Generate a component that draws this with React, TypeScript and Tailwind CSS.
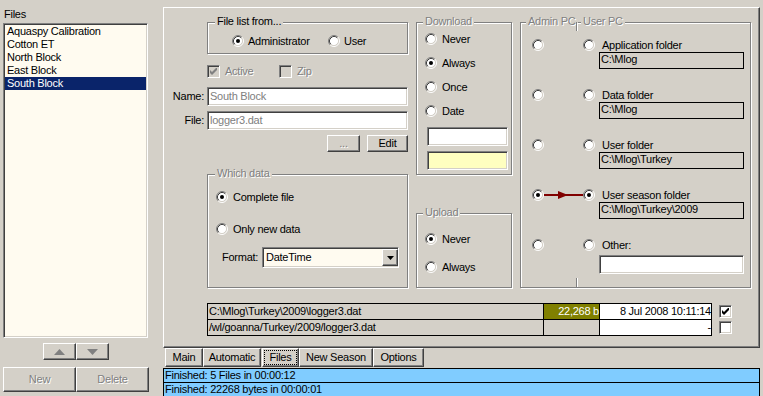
import React from "react";

const RAISED =
  "border border-t-white border-l-white border-r-[#404040] border-b-[#404040] shadow-[inset_-1px_-1px_0_#808080]";
const SUNKEN =
  "border border-t-[#808080] border-l-[#808080] border-r-white border-b-white shadow-[inset_1px_1px_0_#404040,inset_-1px_-1px_0_#d4d0c8]";
const DIS = "text-[#808080] [text-shadow:1px_1px_0_#fff]";
const GROUP =
  "relative border border-[#808080] shadow-[1px_1px_0_#fff,inset_1px_1px_0_#fff]";

function Radio({ checked }: { checked?: boolean }) {
  return (
    <svg width="12" height="12" viewBox="0 0 12 12" className="block shrink-0">
      <circle cx="6" cy="6" r="4.5" fill="#fff" />
      <path d="M2.11 9.89A5.5 5.5 0 0 1 9.89 2.11" stroke="#808080" fill="none" />
      <path d="M9.89 2.11A5.5 5.5 0 0 1 2.11 9.89" stroke="#fff" fill="none" />
      <path d="M2.82 9.18A4.5 4.5 0 0 1 9.18 2.82" stroke="#404040" fill="none" />
      <path d="M9.18 2.82A4.5 4.5 0 0 1 2.82 9.18" stroke="#d4d0c8" fill="none" />
      {checked && <circle cx="6" cy="6" r="2" fill="#000" />}
    </svg>
  );
}

function Check({ checked, disabled }: { checked?: boolean; disabled?: boolean }) {
  return (
    <div
      className={`w-[13px] h-[13px] shrink-0 ${SUNKEN} ${
        disabled ? "bg-[#d4d0c8]" : "bg-white"
      } flex items-center justify-center`}
    >
      {checked && (
        <svg width="7" height="7" viewBox="0 0 7 7" className="block">
          <polygon points="0,2 2,4 7,-1 7,2 2,7 0,5" fill={disabled ? "#808080" : "#000"} />
        </svg>
      )}
    </div>
  );
}

function Group({
  title,
  dis,
  legendLeft,
  className,
  children,
}: {
  title: string;
  dis?: boolean;
  legendLeft: string;
  className?: string;
  children?: React.ReactNode;
}) {
  return (
    <div className={`${GROUP} ${className ?? ""}`}>
      <span
        className={`absolute -top-[8px] ${legendLeft} px-[2px] bg-[#d4d0c8] leading-[13px] whitespace-nowrap ${
          dis ? DIS : ""
        }`}
      >
        {title}
      </span>
      {children}
    </div>
  );
}

function RadioLabel({ label, checked, gap }: { label: string; checked?: boolean; gap: string }) {
  return (
    <div className="flex items-center h-[12px]">
      <Radio checked={checked} />
      <span className={`${gap} whitespace-nowrap`}>{label}</span>
    </div>
  );
}

const adminRows = [
  { label: "Application folder", box: "C:\\Mlog" },
  { label: "Data folder", box: "C:\\Mlog" },
  { label: "User folder", box: "C:\\Mlog\\Turkey" },
  { label: "User season folder", box: "C:\\Mlog\\Turkey\\2009", checked: true },
];

export default function App() {
  return (
    <div className="w-[763px] h-[396px] overflow-hidden bg-[#d4d0c8] flex font-['Liberation_Sans',Arial,sans-serif] text-[11px] leading-[13px] tracking-[-0.25px] text-black">
      {/* Left column */}
      <div className="w-[163px] shrink-0 flex flex-col pl-[3px]">
        <div className="mt-[8px] pl-[1px] h-[13px]">Files</div>
        <div className={`mt-[2px] w-[145px] h-[315px] bg-[#fffbf0] ${SUNKEN} p-[1px]`}>
          {["Aquaspy Calibration", "Cotton ET", "North Block", "East Block"].map((t) => (
            <div key={t} className="h-[13px] pl-[2px] whitespace-nowrap">
              {t}
            </div>
          ))}
          <div className="h-[13px] pl-[2px] bg-[#0a246a] text-white whitespace-nowrap">South Block</div>
        </div>
        <div className="mt-[5px] flex pl-[40px]">
          <div className={`${RAISED} w-[33px] h-[17px] flex items-center justify-center`}>
            <svg width="11" height="6" viewBox="0 0 11 6" className="block">
              <path d="M5.5 0L11 6H0Z" fill="#808080" />
            </svg>
          </div>
          <div className={`${RAISED} w-[33px] h-[17px] flex items-center justify-center`}>
            <svg width="11" height="6" viewBox="0 0 11 6" className="block">
              <path d="M0 0H11L5.5 6Z" fill="#808080" />
            </svg>
          </div>
        </div>
        <div className="mt-[7px] flex">
          <div className={`${RAISED} w-[73px] h-[25px] flex items-center justify-center ${DIS}`}>New</div>
          <div className={`${RAISED} w-[73px] h-[25px] flex items-center justify-center ${DIS}`}>Delete</div>
        </div>
      </div>

      {/* Right column */}
      <div className="flex flex-col">
        <div className={`mt-[7px] w-[597px] h-[341px] ${RAISED} flex flex-col`}>
          <div className="flex items-start">
            {/* Column A */}
            <div className="w-[244px] shrink-0 flex flex-col">
              <Group title="File list from..." legendLeft="left-[7px]" className="mt-[14px] ml-[43px] w-[201px] h-[32px]">
                <div className="mt-[12px] ml-[24px] flex items-center h-[12px]">
                  <div className="w-[96px] flex items-center">
                    <Radio checked />
                    <span className="ml-[4px]">Administrator</span>
                  </div>
                  <Radio />
                  <span className="ml-[4px]">User</span>
                </div>
              </Group>
              <div className="mt-[11px] ml-[43px] flex items-center h-[13px]">
                <div className="w-[72px] flex items-center">
                  <Check checked disabled />
                  <span className={`ml-[5px] ${DIS}`}>Active</span>
                </div>
                <Check disabled />
                <span className={`ml-[5px] ${DIS}`}>Zip</span>
              </div>
              <div className="mt-[9px] flex items-center h-[19px]">
                <div className="w-[40px] text-right">Name:</div>
                <div className={`ml-[3px] w-[201px] h-[19px] ${SUNKEN} bg-white text-[#808080] pl-[2px] flex items-center whitespace-nowrap`}>
                  South Block
                </div>
              </div>
              <div className="mt-[5px] flex items-center h-[19px]">
                <div className="w-[40px] text-right">File:</div>
                <div className={`ml-[3px] w-[201px] h-[19px] ${SUNKEN} bg-white text-[#808080] pl-[2px] flex items-center whitespace-nowrap`}>
                  logger3.dat
                </div>
              </div>
              <div className="mt-[5px] flex h-[17px]">
                <div className={`ml-[163px] w-[33px] h-[17px] ${RAISED} flex items-center justify-center ${DIS}`}>...</div>
                <div className={`ml-[7px] w-[41px] h-[17px] ${RAISED} flex items-center justify-center`}>Edit</div>
              </div>
              <Group title="Which data" dis legendLeft="left-[7px]" className="mt-[22px] ml-[43px] w-[201px] h-[114px] flex flex-col">
                <div className="mt-[16px] ml-[8px]">
                  <RadioLabel label="Complete file" checked gap="ml-[5px]" />
                </div>
                <div className="mt-[20px] ml-[8px]">
                  <RadioLabel label="Only new data" gap="ml-[5px]" />
                </div>
                <div className="mt-[12px] flex items-center">
                  <div className="ml-[14px] w-[40px]">Format:</div>
                  <div className={`w-[137px] h-[21px] ${SUNKEN} bg-[#fffbf0] flex items-center justify-between pl-[3px]`}>
                    <span>DateTime</span>
                    <div className={`${RAISED} bg-[#d4d0c8] w-[16px] h-[17px] flex items-center justify-center`}>
                      <svg width="7" height="4" viewBox="0 0 7 4" className="block">
                        <path d="M0 0H7L3.5 4Z" fill="#000" />
                      </svg>
                    </div>
                  </div>
                </div>
              </Group>
            </div>

            {/* Column B */}
            <div className="ml-[8px] mt-[14px] flex flex-col">
              <Group title="Download" dis legendLeft="left-[6px]" className="w-[96px] h-[153px] flex flex-col">
                <div className="pl-[8px] pt-[10px] flex flex-col gap-[12px]">
                  <RadioLabel label="Never" gap="ml-[5px]" />
                  <RadioLabel label="Always" checked gap="ml-[5px]" />
                  <RadioLabel label="Once" gap="ml-[5px]" />
                  <RadioLabel label="Date" gap="ml-[5px]" />
                </div>
                <div className={`mt-[10px] ml-[10px] w-[81px] h-[19px] ${SUNKEN} bg-white`} />
                <div className={`mt-[5px] ml-[10px] w-[81px] h-[19px] ${SUNKEN} bg-[#ffffc0]`} />
              </Group>
              <Group title="Upload" dis legendLeft="left-[6px]" className="mt-[38px] w-[96px] h-[75px]">
                <div className="pl-[8px] pt-[19px] flex flex-col gap-[16px]">
                  <RadioLabel label="Never" checked gap="ml-[5px]" />
                  <RadioLabel label="Always" gap="ml-[5px]" />
                </div>
              </Group>
            </div>

            {/* Column C */}
            <div className="ml-[8px] mt-[14px]">
              <Group title="Admin PC" dis legendLeft="left-[5px]" className="w-[231px] h-[266px] flex flex-col">
                <span className="absolute left-[55px] -top-[1px] w-[1px] h-[9px] bg-[#808080]" />
                <span className="absolute left-[56px] top-0 w-[1px] h-[8px] bg-white" />
                <span className={`absolute -top-[8px] left-[60px] px-[2px] bg-[#d4d0c8] leading-[13px] whitespace-nowrap ${DIS}`}>
                  User PC
                </span>
                <span className="absolute left-[55px] bottom-0 w-[1px] h-[9px] bg-[#808080]" />
                <span className="absolute left-[56px] bottom-0 w-[1px] h-[9px] bg-white" />
                <div className="mt-[16px] flex flex-col">
                  {adminRows.map((r) => (
                    <div key={r.label} className="flex items-start h-[50px]">
                      <div className="ml-[11px]">
                        <Radio checked={r.checked} />
                      </div>
                      {r.checked ? (
                        <svg width="39" height="12" viewBox="0 0 39 12" className="block shrink-0">
                          <rect x="0" y="5" width="39" height="2" fill="#800000" />
                          <path d="M14 2L24 6L14 10Z" fill="#800000" />
                        </svg>
                      ) : (
                        <div className="w-[39px] shrink-0" />
                      )}
                      <Radio checked={r.checked} />
                      <div className="ml-[4px] w-[145px] flex flex-col">
                        <div className="h-[13px] pl-[3px] whitespace-nowrap">{r.label}</div>
                        <div className="h-[17px] border border-black pl-[1px] whitespace-nowrap overflow-hidden">{r.box}</div>
                      </div>
                    </div>
                  ))}
                  <div className="flex items-start h-[50px]">
                    <div className="ml-[11px]">
                      <Radio />
                    </div>
                    <div className="w-[39px] shrink-0" />
                    <Radio />
                    <div className="ml-[4px] w-[145px] flex flex-col">
                      <div className="h-[13px] pl-[3px]">Other:</div>
                      <div className={`mt-[3px] h-[19px] ${SUNKEN} bg-white`} />
                    </div>
                  </div>
                </div>
              </Group>
            </div>
          </div>

          {/* Path table */}
          <div className="flex ml-[43px] mt-[15px]">
            <div className="border-l border-t border-black flex flex-col">
              <div className="flex h-[16px]">
                <div className="w-[336px] border-r border-b border-black pl-[1px] leading-[15px] whitespace-nowrap overflow-hidden">
                  {"C:\\Mlog\\Turkey\\2009\\logger3.dat"}
                </div>
                <div className="w-[56px] border-r border-b border-black bg-[#808000] text-white text-right leading-[15px] whitespace-nowrap overflow-hidden">
                  22,268 b
                </div>
                <div className="w-[112px] border-r border-b border-black bg-white text-right leading-[15px] whitespace-nowrap overflow-hidden">
                  8 Jul 2008 10:11:14
                </div>
              </div>
              <div className="flex h-[16px]">
                <div className="w-[336px] border-r border-b border-black pl-[1px] leading-[15px] whitespace-nowrap overflow-hidden">
                  /wl/goanna/Turkey/2009/logger3.dat
                </div>
                <div className="w-[56px] border-r border-b border-black" />
                <div className="w-[112px] border-r border-b border-black bg-white text-right leading-[15px]">-</div>
              </div>
            </div>
            <div className="ml-[7px] mt-[2px] flex flex-col gap-[3px]">
              <Check checked />
              <Check />
            </div>
          </div>
        </div>

        {/* Tabs */}
        <div className="flex h-[19px] pl-[2px]">
          <div className={`${RAISED} w-[38px] h-[19px] flex items-center justify-center`}>Main</div>
          <div className={`${RAISED} w-[58px] h-[19px] flex items-center justify-center`}>Automatic</div>
          <div className={`${RAISED} ml-[1px] w-[37px] h-[19px] p-[1px]`}>
            <div className="w-full h-full border border-dotted border-black flex items-center justify-center">Files</div>
          </div>
          <div className={`${RAISED} w-[74px] h-[19px] flex items-center justify-center`}>New Season</div>
          <div className={`${RAISED} w-[51px] h-[19px] flex items-center justify-center`}>Options</div>
        </div>

        {/* Status */}
        <div className="mt-[1px] w-[597px] h-[14px] border-t border-l border-r border-black bg-[#80ccff] pl-[1px] whitespace-nowrap">
          Finished: 5 Files in 00:00:12
        </div>
        <div className="w-[597px] h-[14px] border-t border-l border-r border-black bg-[#80ccff] pl-[1px] whitespace-nowrap">
          Finished: 22268 bytes in 00:00:01
        </div>
      </div>
    </div>
  );
}
